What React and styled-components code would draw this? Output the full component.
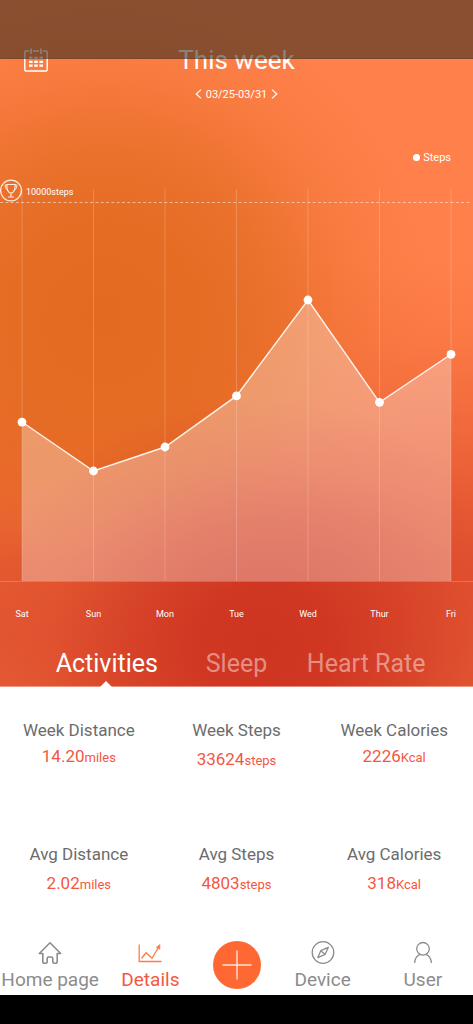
import React, { useState } from 'react';
import styled, { createGlobalStyle } from 'styled-components';

const GlobalStyle = createGlobalStyle`
  * {
    box-sizing: border-box;
  }

  body {
    margin: 0;
    background: #fff;
    font-family: Roboto, 'Liberation Sans', sans-serif;
  }

  button {
    padding: 0;
    border: 0;
    background: none;
    font-family: inherit;
    cursor: pointer;
  }
`;

const Screen = styled.div`
  position: relative;
  display: flex;
  flex-direction: column;
  min-height: 100vh;
`;

const StatusBar = styled.div`
  position: absolute;
  top: 0;
  left: 0;
  right: 0;
  height: 59px;
  background: rgba(58, 46, 32, 0.6);
  border-bottom: 1px solid rgba(70, 40, 20, 0.2);
  pointer-events: none;
`;

const Hero = styled.section`
  padding-top: 44px;
  color: #fff;
  background:
    radial-gradient(ellipse 60% 36% at 56% 94%, #ce3521 0%, rgba(207, 54, 34, 0.95) 25%, rgba(210, 60, 37, 0.72) 50%, rgba(218, 72, 42, 0.35) 76%, rgba(230, 90, 50, 0) 100%),
    radial-gradient(ellipse 70% 48% at 22% 46%, #e36b21 0%, rgba(228, 108, 34, 0.96) 30%, rgba(229, 109, 36, 0.78) 50%, rgba(234, 113, 44, 0.45) 70%, rgba(238, 116, 50, 0.16) 86%, rgba(240, 118, 55, 0) 100%),
    linear-gradient(to bottom, #ff804a 0%, #ff804a 38%, #fa7844 50%, #ee6439 66%, #e25230 82%, #e55a34 100%);
`;

const Header = styled.header`
  display: grid;
  grid-template-columns: 1fr auto 1fr;
  align-items: center;
  height: 32px;
  padding: 0 24px;
`;

const CalendarButton = styled.button`
  width: 24px;
  height: 26px;
  color: #fff;

  svg {
    display: block;
  }
`;

const Title = styled.h1`
  margin: 0;
  font-size: 26px;
  line-height: 32px;
  font-weight: 400;
`;

const WeekPicker = styled.div`
  display: flex;
  justify-content: center;
  align-items: center;
  gap: 4px;
  height: 20px;
  margin-top: 8px;
  font-size: 11px;
`;

const ArrowButton = styled.button`
  display: flex;
  color: #fff;
`;

const Legend = styled.div`
  display: flex;
  justify-content: flex-end;
  align-items: center;
  gap: 3px;
  height: 20px;
  margin-top: 43px;
  padding: 0 22px;
  font-size: 11px;
`;

const LegendDot = styled.span`
  width: 7px;
  height: 7px;
  border-radius: 50%;
  background: #fff;
`;

const Chart = styled.svg`
  display: block;
  width: 100%;
  margin-top: 8px;

  text {
    fill: #fff;
    font-size: 9px;
  }
`;

const Tabs = styled.div`
  display: grid;
  grid-template-columns: repeat(3, 1fr);
  height: 62px;
  padding: 0 42px;
  border-bottom: 1px solid rgba(255, 255, 255, 0.4);
`;

const Tab = styled.button`
  position: relative;
  padding-top: 16px;
  color: ${({ $active }) => ($active ? '#fff' : 'rgba(255, 255, 255, 0.45)')};
  font-size: 25px;
  line-height: 44px;
  white-space: nowrap;

  &::after {
    content: '';
    display: ${({ $active }) => ($active ? 'block' : 'none')};
    position: absolute;
    bottom: -1px;
    left: calc(50% - 7px);
    border: 6px solid transparent;
    border-top-width: 0;
    border-bottom-color: #fff;
  }
`;

const Stats = styled.section`
  flex: 1;
  display: grid;
  grid-template-columns: repeat(3, 1fr);
  align-content: start;
  row-gap: 69px;
  padding: 31px 0 24px;
  text-align: center;
`;

const StatLabel = styled.div`
  color: #6c6c6c;
  font-size: 17px;
  line-height: 24px;
`;

const StatValue = styled.div`
  margin-top: ${({ $tight }) => ($tight ? '2px' : '5px')};
  color: #f4573f;
  font-size: 17px;
  line-height: 24px;
`;

const Unit = styled.span`
  font-size: 13px;
`;

const NavBar = styled.nav`
  display: flex;
  height: 61px;
`;

const NavItem = styled.button`
  flex: 1;
  display: flex;
  flex-direction: column;
  align-items: center;
  gap: 3px;
  padding-top: 7px;
  color: ${({ $active }) => ($active ? '#f4573f' : '#8c8c8c')};
  font-size: 19px;
  line-height: 24px;
  white-space: nowrap;
`;

const AddButton = styled.button`
  display: flex;
  justify-content: center;
  align-items: center;
  width: 48px;
  height: 48px;
  margin: 7px 12px 0;
  border-radius: 50%;
  background: #ff6833;
`;

const SystemBar = styled.div`
  height: 29px;
  background: #000;
`;

const CalendarIcon = () => (
  <svg width="24" height="26" viewBox="0 0 24 26" fill="none" stroke="currentColor">
    <path d="M5 4H2Q.8 4 .8 5.200V22.800Q.8 24 2 24H22Q23.200 24 23.200 22.800V5.200Q23.200 4 22 4H19M9 4H15" strokeWidth="1.400" />
    <path d="M7 1.500V7M17 1.500V7" strokeWidth="1.700" />
    <path d="M5 10.800H19M5 14.800H19M5 18.600H19" strokeWidth="2.200" strokeDasharray="3.600 1.600" />
  </svg>
);

const Chevron = ({ d }) => (
  <svg width="7" height="10" viewBox="0 0 7 10" fill="none" stroke="currentColor" strokeWidth="1.200">
    <path d={d} />
  </svg>
);

const HomeIcon = () => (
  <svg width="24" height="24" viewBox="0 0 24 24" fill="none" stroke="currentColor" strokeWidth="1.600" strokeLinejoin="round" strokeLinecap="round">
    <path d="M1.300 12.500L12 1.800L22.700 12.500H19.200V20.500Q19.200 22.300 17.400 22.300H16.300Q14.800 22.300 14.800 20.800V17.500Q14.800 16 13.300 16H10.700Q9.200 16 9.200 17.500V20.800Q9.200 22.300 7.700 22.300H6.600Q4.800 22.300 4.800 20.500V12.500Z" />
  </svg>
);

const DetailsIcon = () => (
  <svg width="24" height="24" viewBox="0 0 24 24" fill="none" stroke="#ff7a45" strokeWidth="1.300">
    <path d="M1.200 3.500V20.500H23.500" />
    <path d="M3.500 17.500L8 11.800L14 17.300L21 5.500" />
    <path d="M18.300 6.200L22 3.600L21.800 8.200Z" fill="#ff7a45" strokeWidth="0.600" />
  </svg>
);

const DeviceIcon = () => (
  <svg width="24" height="24" viewBox="0 0 24 24" fill="none" stroke="currentColor" strokeWidth="1.300" strokeLinejoin="round">
    <circle cx="12" cy="11.500" r="10.800" />
    <path d="M17.300 6.400L14.200 13.300L6.800 16.600L9.800 9.700Z" />
    <path d="M10 9.900L14 13.200" />
  </svg>
);

const UserIcon = () => (
  <svg width="24" height="24" viewBox="0 0 24 24" fill="none" stroke="currentColor" strokeWidth="1.300">
    <circle cx="12" cy="7.800" r="6.300" />
    <path d="M3.600 22Q4 15.400 9 13.300M15 13.300Q20 15.400 20.400 22" />
  </svg>
);

const PlusIcon = () => (
  <svg width="30" height="30" viewBox="0 0 30 30" stroke="#ffe3d8" strokeWidth="1.400">
    <path d="M15 .5V29.500M.5 15H29.500" />
  </svg>
);

const GOAL = 10000;
const BASELINE = 406;
const GOAL_Y = 27.5;

const week = [
  { day: 'Sat', steps: 4200 },
  { day: 'Sun', steps: 2906 },
  { day: 'Mon', steps: 3540 },
  { day: 'Tue', steps: 4890 },
  { day: 'Wed', steps: 7424 },
  { day: 'Thur', steps: 4720 },
  { day: 'Fri', steps: 5990 },
];

const StepsChart = () => {
  const points = week.map(({ day, steps }, i) => ({
    day,
    x: 22 + i * 71.5,
    y: BASELINE - (steps / GOAL) * (BASELINE - GOAL_Y),
  }));
  const line = points.map((p) => `${p.x},${p.y}`).join(' ');
  const first = points[0];
  const last = points[points.length - 1];

  return (
    <Chart viewBox="0 0 473 450" role="img" aria-label="Steps per day">
      {points.map((p) => (
        <line key={p.day} x1={p.x} x2={p.x} y1="14" y2={BASELINE} stroke="#fff" strokeOpacity="0.2" />
      ))}
      <polygon
        points={`${first.x},${BASELINE} ${line} ${last.x},${BASELINE}`}
        fill="#f8eee8"
        fillOpacity="0.35"
      />
      <line x1="0" x2="473" y1="406.500" y2="406.500" stroke="#fff" strokeOpacity="0.2" />
      <line x1="0" x2="470" y1={GOAL_Y} y2={GOAL_Y} stroke="#fff" strokeOpacity="0.5" strokeDasharray="3 2.300" />
      <polyline points={line} fill="none" stroke="#fff" strokeOpacity="0.9" strokeWidth="1.400" />
      {points.map((p) => (
        <circle key={p.day} cx={p.x} cy={p.y} r="4.400" fill="#fff" />
      ))}

      {/* goal badge */}
      <g fill="none" stroke="#fff" strokeOpacity="0.85">
        <circle cx="11" cy="15.500" r="10.400" strokeWidth="1.300" />
        <path d="M6.800 9.500H15.200Q15.200 17.800 11 18.200Q6.800 17.800 6.800 9.500ZM11 18.200V21.600M8 22H14" strokeWidth="1.200" />
        <path d="M6.800 10H4.900Q5 14.300 8 15.500M15.200 10H17.100Q17 14.300 14 15.500" strokeWidth="0.900" />
      </g>
      <text x="26" y="20">10000steps</text>

      {points.map((p) => (
        <text key={p.day} x={p.x} y="442" textAnchor="middle">{p.day}</text>
      ))}
    </Chart>
  );
};

const tabs = ['Activities', 'Sleep', 'Heart Rate'];

const stats = [
  { label: 'Week Distance', value: '14.20', unit: 'miles', tight: true },
  { label: 'Week Steps', value: '33624', unit: 'steps' },
  { label: 'Week Calories', value: '2226', unit: 'Kcal', tight: true },
  { label: 'Avg Distance', value: '2.02', unit: 'miles' },
  { label: 'Avg Steps', value: '4803', unit: 'steps' },
  { label: 'Avg Calories', value: '318', unit: 'Kcal' },
];

const App = () => {
  const [activeTab, setActiveTab] = useState('Activities');

  return (
    <Screen>
      <GlobalStyle />
      <Hero>
        <Header>
          <CalendarButton aria-label="Calendar">
            <CalendarIcon />
          </CalendarButton>
          <Title>This week</Title>
        </Header>

        <WeekPicker>
          <ArrowButton aria-label="Previous week">
            <Chevron d="M6 .6L1.200 5L6 9.400" />
          </ArrowButton>
          <span>03/25-03/31</span>
          <ArrowButton aria-label="Next week">
            <Chevron d="M1 .6L5.800 5L1 9.400" />
          </ArrowButton>
        </WeekPicker>

        <Legend>
          <LegendDot />
          Steps
        </Legend>

        <StepsChart />

        <Tabs role="tablist">
          {tabs.map((tab) => (
            <Tab
              key={tab}
              role="tab"
              aria-selected={tab === activeTab}
              $active={tab === activeTab}
              onClick={() => setActiveTab(tab)}
            >
              {tab}
            </Tab>
          ))}
        </Tabs>
      </Hero>

      <Stats>
        {stats.map(({ label, value, unit, tight }) => (
          <div key={label}>
            <StatLabel>{label}</StatLabel>
            <StatValue $tight={tight}>
              {value}
              <Unit>{unit}</Unit>
            </StatValue>
          </div>
        ))}
      </Stats>

      <NavBar>
        <NavItem>
          <HomeIcon />
          Home page
        </NavItem>
        <NavItem $active>
          <DetailsIcon />
          Details
        </NavItem>
        <AddButton aria-label="Add">
          <PlusIcon />
        </AddButton>
        <NavItem>
          <DeviceIcon />
          Device
        </NavItem>
        <NavItem>
          <UserIcon />
          User
        </NavItem>
      </NavBar>
      <SystemBar />
      <StatusBar />
    </Screen>
  );
};

export default App;
